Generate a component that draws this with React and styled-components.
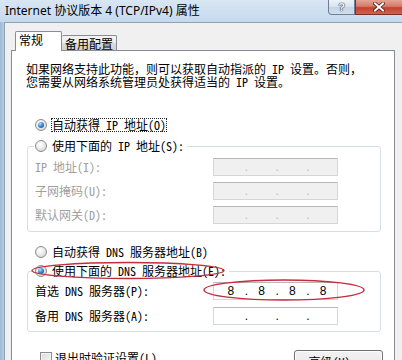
import React from "react";
import styled, { createGlobalStyle } from "styled-components";

const CJK = `"Noto Sans Mono CJK SC", "Noto Sans CJK SC", sans-serif`;
const UI = `"Noto Sans", "Noto Sans CJK SC", sans-serif`;

const Global = createGlobalStyle`
  html, body { margin: 0; padding: 0; background: #fff; }
  body { width: 402px; height: 360px; overflow: hidden; }
  * { box-sizing: border-box; }
`;

const Window = styled.div`
  position: relative;
  width: 402px;
  height: 360px;
  overflow: hidden;
  display: flex;
  flex-direction: column;
  background: linear-gradient(180deg, #d6e4f2 0%, #c3d7ec 100%);
`;

const TitleBar = styled.div`
  height: 22px;
  flex: none;
  display: flex;
  align-items: flex-start;
  background: linear-gradient(180deg, #d9e6f3 0%, #cddff0 60%, #c6d9ed 100%);
`;

const Title = styled.div`
  margin: 3px 0 0 5px;
  font: 12px/16px ${UI};
  color: #000;
  white-space: nowrap;
`;

const Caption = styled.div`
  margin-left: auto;
  display: flex;
`;

const HelpButton = styled.div`
  width: 27px;
  height: 15px;
  border: 1px solid #6c8098;
  border-top: none;
  border-radius: 0 0 0 4px;
  background: linear-gradient(180deg, #eef3f9 0%, #d7e2ee 50%, #c4d3e3 51%, #d2deeb 100%);
  display: flex;
  align-items: center;
  justify-content: center;
  font: bold 11px/1 "Liberation Sans", sans-serif;
  color: #f4f6f8;
  text-shadow: 0 0 1px #3a4656, 0 0 1px #3a4656, 0 0 1px #3a4656;
`;

const CloseButton = styled.div`
  width: 47px;
  height: 15px;
  border: 1px solid #7b2f27;
  border-top: none;
  border-right: none;
  background: linear-gradient(180deg, #e3a596 0%, #d57c68 45%, #c2432f 55%, #d0624c 100%);
  display: flex;
  align-items: center;
  justify-content: center;
`;

const Body = styled.div`
  flex: 1;
  min-height: 0;
  display: flex;
`;

const SideFrame = styled.div`
  width: 4px;
  flex: none;
  background: linear-gradient(90deg, #9db9d6 0%, #b8cde3 100%);
`;

const Client = styled.div`
  flex: 1;
  min-width: 0;
  background: #f0f0f0;
  border-left: 1px solid #8ea2b6;
  border-top: 1px solid #8ea2b6;
  padding: 8px 7px 0 6px;
  display: flex;
  flex-direction: column;
`;

const TabRow = styled.div`
  height: 20px;
  flex: none;
  display: flex;
  align-items: flex-end;
  padding-left: 4px;
  margin-bottom: -1px;
  position: relative;
  z-index: 1;
`;

const Tab = styled.div`
  font: 12px/14px ${CJK};
  color: #000;
  border: 1px solid #898c95;
  border-bottom: none;
  border-radius: 2px 2px 0 0;
  white-space: nowrap;
  ${(p) =>
    p.$active
      ? `
    width: 47px;
    height: 20px;
    background: #fff;
    padding: 1px 0 0 3px;
  `
      : `
    width: 55px;
    height: 15px;
    margin-bottom: 1px;
    border-left: none;
    background: linear-gradient(180deg, #f3f3f3 0%, #ebebeb 50%, #dddddd 51%, #cfcfcf 100%);
    padding: 1px 0 0 3px;
  `}
`;

const Panel = styled.div`
  flex: 1;
  background: #fff;
  border: 1px solid #898c95;
  padding: 11px 13px 0 15px;
  display: flex;
  flex-direction: column;
`;

const Description = styled.p`
  margin: 0 0 0 -1px;
  font: 12px/13px ${CJK};
  color: #000;
  white-space: nowrap;
`;

const Option = styled.div`
  display: flex;
  align-items: center;
  height: 14px;
  gap: 4px;
  margin-top: ${(p) => p.$top || 0}px;
  margin-left: ${(p) => (p.$inLegend ? 0 : 8)}px;
`;

const Radio = styled.span`
  width: 12px;
  height: 12px;
  flex: none;
  border-radius: 50%;
  border: 1px solid #8c8c8c;
  background: radial-gradient(circle at 40% 35%, #ffffff 0%, #ececec 45%, #cbcbcb 100%);
  display: flex;
  align-items: center;
  justify-content: center;
  &::after {
    content: "";
    width: 6px;
    height: 6px;
    border-radius: 50%;
    display: ${(p) => (p.$checked ? "block" : "none")};
    background: radial-gradient(circle at 35% 30%, #b4e4ff 0%, #3c8ad6 45%, #123f86 100%);
  }
`;

const Check = styled.span`
  width: 12px;
  height: 12px;
  flex: none;
  border: 1px solid #8c8c8c;
  background: linear-gradient(135deg, #dcdcdc 0%, #f6f6f6 100%);
  box-shadow: inset 0 0 0 1px #f2f2f2;
`;

const OptionText = styled.span`
  font: 12px/12px ${CJK};
  color: ${(p) => (p.$disabled ? "#a0a0a0" : "#000")};
  border: 1px ${(p) => (p.$focus ? "dotted #222" : "solid transparent")};
  white-space: nowrap;
`;

const Group = styled.fieldset`
  margin: ${(p) => p.$top}px 0 0 0;
  border: 1px solid #d5dfe5;
  border-radius: 3px;
  padding: ${(p) => p.$padTop}px 7px ${(p) => p.$padBottom}px 7px;
  min-width: 0;
  display: flex;
  flex-direction: column;
  gap: ${(p) => p.$gap}px;
`;

const Legend = styled.legend`
  padding: 0 2px 0 1px;
  margin-left: -1px;
  height: 14px;
`;

const FieldRow = styled.div`
  display: flex;
  align-items: center;
  height: 18px;
`;

const FieldLabel = styled.span`
  width: 178px;
  flex: none;
  font: 12px/14px ${CJK};
  color: ${(p) => (p.$disabled ? "#a0a0a0" : "#000")};
  white-space: nowrap;
`;

const IpBox = styled.div`
  width: 125px;
  height: 18px;
  flex: none;
  display: flex;
  align-items: center;
  padding-left: 3px;
  border: 1px solid #d6d6d6;
  border-top-color: #b8b8b8;
  background: ${(p) => (p.$disabled ? "#f0f0f0" : "#fff")};
  font: 12px/16px "Liberation Sans", Arial, sans-serif;
  color: ${(p) => (p.$disabled ? "#b8b8b8" : "#000")};
`;

const IpSegment = styled.span`
  width: 28px;
  text-align: center;
`;

const IpDot = styled.span`
  width: 3px;
  text-align: center;
`;

const BottomRow = styled.div`
  margin-top: 18px;
  margin-right: -2px;
  padding-left: 13px;
  display: flex;
  align-items: flex-start;
  justify-content: space-between;
`;

const CheckOption = styled.div`
  display: flex;
  align-items: center;
  gap: 2px;
  margin-top: 1px;
`;

const Button = styled.div`
  width: 89px;
  height: 23px;
  border: 1px solid #707070;
  border-radius: 3px;
  background: linear-gradient(180deg, #f2f2f2 0%, #ebebeb 50%, #dddddd 51%, #cfcfcf 100%);
  box-shadow: inset 0 0 0 1px #fcfcfc;
  font: 12px/21px ${CJK};
  color: #000;
  text-align: center;
`;

const Annotation = styled.svg`
  position: absolute;
  left: 0;
  top: 0;
  pointer-events: none;
`;

function IpInput({ disabled, values = ["", "", "", ""] }) {
  return (
    <IpBox $disabled={disabled}>
      <IpSegment>{values[0]}</IpSegment>
      <IpDot>.</IpDot>
      <IpSegment>{values[1]}</IpSegment>
      <IpDot>.</IpDot>
      <IpSegment>{values[2]}</IpSegment>
      <IpDot>.</IpDot>
      <IpSegment>{values[3]}</IpSegment>
    </IpBox>
  );
}

function CloseGlyph() {
  return (
    <svg width="12" height="10" viewBox="0 0 12 10">
      <path d="M2 1.5 L10 8.5 M10 1.5 L2 8.5" stroke="#5a1a12" strokeWidth="3.6" strokeLinecap="square" />
      <path d="M2 1.5 L10 8.5 M10 1.5 L2 8.5" stroke="#ffffff" strokeWidth="2" strokeLinecap="square" />
    </svg>
  );
}

export default function App() {
  return (
    <>
      <Global />
      <Window>
        <TitleBar>
          <Title>Internet 协议版本 4 (TCP/IPv4) 属性</Title>
          <Caption>
            <HelpButton>?</HelpButton>
            <CloseButton>
              <CloseGlyph />
            </CloseButton>
          </Caption>
        </TitleBar>
        <Body>
          <SideFrame />
          <Client>
            <TabRow>
              <Tab $active>常规</Tab>
              <Tab>备用配置</Tab>
            </TabRow>
            <Panel>
              <Description>
                如果网络支持此功能，则可以获取自动指派的 IP 设置。否则，
                <br />
                您需要从网络系统管理员处获得适当的 IP 设置。
              </Description>

              <Option $top={30}>
                <Radio $checked />
                <OptionText $focus>自动获得 IP 地址(O)</OptionText>
              </Option>

              <Group $top={7} $padTop={5} $padBottom={7} $gap={6}>
                <Legend>
                  <Option $inLegend>
                    <Radio />
                    <OptionText>使用下面的 IP 地址(S):</OptionText>
                  </Option>
                </Legend>
                <FieldRow>
                  <FieldLabel $disabled>IP 地址(I):</FieldLabel>
                  <IpInput disabled />
                </FieldRow>
                <FieldRow>
                  <FieldLabel $disabled>子网掩码(U):</FieldLabel>
                  <IpInput disabled />
                </FieldRow>
                <FieldRow>
                  <FieldLabel $disabled>默认网关(D):</FieldLabel>
                  <IpInput disabled />
                </FieldRow>
              </Group>

              <Option $top={13}>
                <Radio />
                <OptionText>自动获得 DNS 服务器地址(B)</OptionText>
              </Option>

              <Group $top={5} $padTop={4} $padBottom={6} $gap={7}>
                <Legend>
                  <Option $inLegend>
                    <Radio $checked />
                    <OptionText>使用下面的 DNS 服务器地址(E):</OptionText>
                  </Option>
                </Legend>
                <FieldRow>
                  <FieldLabel>首选 DNS 服务器(P):</FieldLabel>
                  <IpInput values={["8", "8", "8", "8"]} />
                </FieldRow>
                <FieldRow>
                  <FieldLabel>备用 DNS 服务器(A):</FieldLabel>
                  <IpInput />
                </FieldRow>
              </Group>

              <BottomRow>
                <CheckOption>
                  <Check />
                  <OptionText>退出时验证设置(L)</OptionText>
                </CheckOption>
                <Button>高级(V)...</Button>
              </BottomRow>
            </Panel>
          </Client>
        </Body>
        <Annotation width="402" height="360" viewBox="0 0 402 360">
          <ellipse cx="128" cy="270.5" rx="96" ry="8" fill="none" stroke="#c42c3c" strokeWidth="1.4" />
          <ellipse cx="284" cy="290" rx="80" ry="10" fill="none" stroke="#c42c3c" strokeWidth="1.4" />
        </Annotation>
      </Window>
    </>
  );
}
